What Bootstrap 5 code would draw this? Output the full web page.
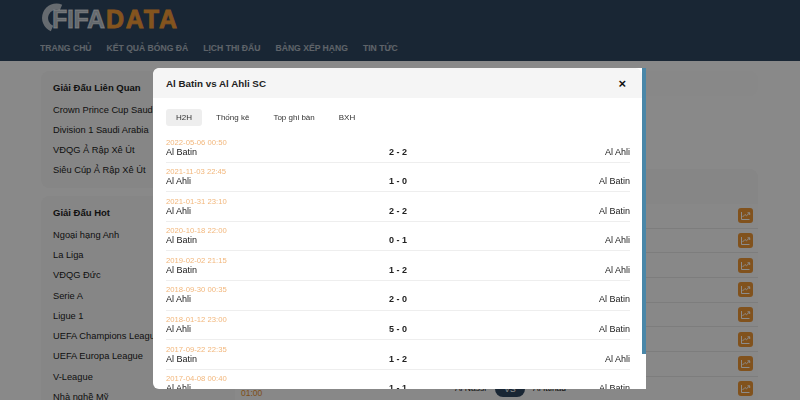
<!DOCTYPE html>
<html lang="vi">

<head>
    <meta charset="UTF-8">
    <title>FIFA Data</title>
    <meta name="viewport" content="width=device-width, initial-scale=1">
    <link href="https://cdn.jsdelivr.net/npm/bootstrap@5.3.3/dist/css/bootstrap.min.css" rel="stylesheet">
    <style>
        body {
            background: #fafafa;
            font-family: "Liberation Sans", Arial, sans-serif;
            font-size: 9.3px;
            color: #222;
            overflow: hidden;
            height: 400px;
        }

        .site-head {
            background: #2e4660;
            height: 61px;
            padding: 3px 40px 0;
        }

        .site-logo {
            display: block;
            width: 140px;
            height: 30px;
        }

        .site-logo text {
            font-family: "Liberation Sans", Arial, sans-serif;
            font-weight: 700;
            font-size: 25px;
            stroke-width: .8px;
        }

        .site-menu {
            gap: 15px;
            margin-top: 9px;
        }

        .site-menu a {
            color: #fff;
            opacity: .6;
            text-decoration: none;
            font-size: 8.6px;
            font-weight: 700;
            line-height: 12px;
        }

        .page-wrap {
            padding: 10px 42px 0 41px;
            gap: 5px;
        }

        .side-col {
            width: 194px;
            flex: none;
        }

        .side-box {
            background: #f4f4f4;
            border-radius: 8px;
            padding: 6px 12px 7px;
            margin-bottom: 8.5px;
            white-space: nowrap;
            overflow: hidden;
        }

        .side-box h6 {
            font-size: 9.5px;
            font-weight: 700;
            line-height: 21px;
            margin: 0 0 1.5px;
        }

        .side-box a {
            display: block;
            color: #222;
            text-decoration: none;
            line-height: 20.3px;
        }

        .main-col {
            flex: 1;
        }

        .top-panel {
            background: #f7f7f7;
            border-radius: 8px;
            height: 25px;
            margin-bottom: 73px;
        }

        .match-panel {
            background: #f4f4f4;
            border-radius: 8px;
            padding-top: 35px;
        }

        .match-line {
            height: 24.7px;
            border-bottom: 1px solid #e4e4e4;
            background: #f7f7f7;
            padding: 0 5px;
            font-size: 8.5px;
        }

        .kick-time {
            color: #e8912e;
            width: 60px;
            margin-left: -4px;
            padding-top: 10px;
        }

        .home-name {
            width: 186px;
            text-align: right;
        }

        .vs-pill {
            background: #2e4660;
            color: #fff;
            width: 30px;
            height: 16px;
            line-height: 16px;
            border-radius: 8px;
            text-align: center;
            margin: 0 8px;
        }

        .chart-btn {
            width: 15px;
            height: 15px;
            background: #ec9535;
            border-radius: 3px;
            margin-left: auto;
        }

        .chart-btn svg {
            display: block;
            width: 15px;
            height: 15px;
        }

        .modal-backdrop.show {
            opacity: .45;
        }

        .modal-dialog {
            max-width: 493px;
            margin: 68px 0 0 153px;
        }

        .modal-content {
            height: 321px;
            overflow: hidden;
            border: 0;
            border-radius: 6px 0 0 6px;
        }

        /* scrollbar of the modal, as the picture shows it */
        .modal-thumb {
            position: absolute;
            top: 0;
            right: 0;
            width: 4px;
            height: 286px;
            background: #4a87a8;
        }

        .modal-header {
            background: #f5f5f5;
            height: 30px;
            padding: 2px 16px 0 13px;
            margin-right: 4px;
            border: 0;
            flex: none;
        }

        .modal-title {
            font-size: 9.8px;
            font-weight: 700;
            line-height: 14px;
        }

        .close-mark {
            font-size: 13px;
            font-weight: 700;
            line-height: 14px;
            color: #111;
            background: none;
            border: 0;
            padding: 0;
        }

        .modal-body {
            padding: 11px 16px 26px 13px;
            flex: none;
        }

        .nav-pills {
            gap: 4px;
            margin-bottom: 7px;
        }

        .nav-pills .nav-link {
            font-size: 8px;
            line-height: 17px;
            padding: 0 10px;
            border-radius: 3px;
            color: #333;
        }

        .nav-pills .nav-link.active {
            background: #eee;
            color: #333;
        }

        .h2h-line {
            border-bottom: 1px solid #eee;
            height: 29.6px;
            padding-top: 4.5px;
        }

        .h2h-date {
            color: #f2b77c;
            font-size: 7.7px;
            line-height: 10px;
        }

        .h2h-teams {
            line-height: 8px;
            font-size: 9px;
        }
    </style>
</head>

<body>

    <svg width="0" height="0" class="d-none">
        <symbol id="trend" viewBox="0 0 15 15">
            <path d="M3.500 4v7.500h8M4.500 9l2.500-2.500 1.500 1.200L11.500 5M9.500 4.800h2.200V7" fill="none" stroke="#fff" stroke-width="1"/>
        </symbol>
    </svg>

    <!-- Header -->
    <header class="site-head">
        <svg class="site-logo" viewBox="0 0 140 30">
            <path d="M21 4.500A11 11 0 1 0 12 25.500" fill="none" stroke="#fff" stroke-opacity=".68" stroke-width="6"/>
            <text x="12" y="25" fill="#fff" fill-opacity=".68" stroke="#fff" stroke-opacity=".68" textLength="53">FIFA</text>
            <text x="66" y="25" fill="#f09a38" stroke="#f09a38" textLength="71">DATA</text>
        </svg>
        <nav class="site-menu d-flex">
            <a href="#">TRANG CHỦ</a>
            <a href="#">KẾT QUẢ BÓNG ĐÁ</a>
            <a href="#">LỊCH THI ĐẤU</a>
            <a href="#">BẢNG XẾP HẠNG</a>
            <a href="#">TIN TỨC</a>
        </nav>
    </header>

    <!-- Page content, behind the modal -->
    <div class="page-wrap d-flex">
        <aside class="side-col">
            <div class="side-box">
                <h6>Giải Đấu Liên Quan</h6>
                <a href="#">Crown Prince Cup Saudi Arabia</a>
                <a href="#">Division 1 Saudi Arabia</a>
                <a href="#">VĐQG Ả Rập Xê Út</a>
                <a href="#">Siêu Cúp Ả Rập Xê Út</a>
            </div>
            <div class="side-box">
                <h6>Giải Đấu Hot</h6>
                <a href="#">Ngoại hạng Anh</a>
                <a href="#">La Liga</a>
                <a href="#">VĐQG Đức</a>
                <a href="#">Serie A</a>
                <a href="#">Ligue 1</a>
                <a href="#">UEFA Champions League</a>
                <a href="#">UEFA Europa League</a>
                <a href="#">V-League</a>
                <a href="#">Nhà nghề Mỹ</a>
            </div>
        </aside>
        <main class="main-col">
            <div class="top-panel"></div>
            <div class="match-panel">
                <div class="match-line d-flex align-items-center"><span class="chart-btn"><svg><use href="#trend"/></svg></span></div>
                <div class="match-line d-flex align-items-center"><span class="chart-btn"><svg><use href="#trend"/></svg></span></div>
                <div class="match-line d-flex align-items-center"><span class="chart-btn"><svg><use href="#trend"/></svg></span></div>
                <div class="match-line d-flex align-items-center"><span class="chart-btn"><svg><use href="#trend"/></svg></span></div>
                <div class="match-line d-flex align-items-center"><span class="chart-btn"><svg><use href="#trend"/></svg></span></div>
                <div class="match-line d-flex align-items-center"><span class="chart-btn"><svg><use href="#trend"/></svg></span></div>
                <div class="match-line d-flex align-items-center"><span class="chart-btn"><svg><use href="#trend"/></svg></span></div>
                <div class="match-line d-flex align-items-center">
                    <span class="kick-time">01:00</span>
                    <span class="home-name">Al Nassr</span>
                    <span class="vs-pill">VS</span>
                    <span>Al Ittihad</span>
                    <span class="chart-btn"><svg><use href="#trend"/></svg></span>
                </div>
            </div>
        </main>
    </div>

    <div class="modal-backdrop show"></div>

    <!-- H2H modal -->
    <div class="modal d-block" tabindex="-1">
        <div class="modal-dialog">
            <div class="modal-content">
                <div class="modal-thumb"></div>
                <div class="modal-header">
                    <h5 class="modal-title">Al Batin vs Al Ahli SC</h5>
                    <button type="button" class="close-mark ms-auto" aria-label="Close">&times;</button>
                </div>
                <div class="modal-body">
                    <ul class="nav nav-pills">
                        <li class="nav-item"><a class="nav-link active" href="#">H2H</a></li>
                        <li class="nav-item"><a class="nav-link" href="#">Thống kê</a></li>
                        <li class="nav-item"><a class="nav-link" href="#">Top ghi bàn</a></li>
                        <li class="nav-item"><a class="nav-link" href="#">BXH</a></li>
                    </ul>
                    <div class="h2h-line">
                        <div class="h2h-date">2022-05-06 00:50</div>
                        <div class="row g-0 h2h-teams"><div class="col-4">Al Batin</div><div class="col-4 text-center fw-bold">2 - 2</div><div class="col-4 text-end">Al Ahli</div></div>
                    </div>
                    <div class="h2h-line">
                        <div class="h2h-date">2021-11-03 22:45</div>
                        <div class="row g-0 h2h-teams"><div class="col-4">Al Ahli</div><div class="col-4 text-center fw-bold">1 - 0</div><div class="col-4 text-end">Al Batin</div></div>
                    </div>
                    <div class="h2h-line">
                        <div class="h2h-date">2021-01-31 23:10</div>
                        <div class="row g-0 h2h-teams"><div class="col-4">Al Ahli</div><div class="col-4 text-center fw-bold">2 - 2</div><div class="col-4 text-end">Al Batin</div></div>
                    </div>
                    <div class="h2h-line">
                        <div class="h2h-date">2020-10-18 22:00</div>
                        <div class="row g-0 h2h-teams"><div class="col-4">Al Batin</div><div class="col-4 text-center fw-bold">0 - 1</div><div class="col-4 text-end">Al Ahli</div></div>
                    </div>
                    <div class="h2h-line">
                        <div class="h2h-date">2019-02-02 21:15</div>
                        <div class="row g-0 h2h-teams"><div class="col-4">Al Batin</div><div class="col-4 text-center fw-bold">1 - 2</div><div class="col-4 text-end">Al Ahli</div></div>
                    </div>
                    <div class="h2h-line">
                        <div class="h2h-date">2018-09-30 00:35</div>
                        <div class="row g-0 h2h-teams"><div class="col-4">Al Ahli</div><div class="col-4 text-center fw-bold">2 - 0</div><div class="col-4 text-end">Al Batin</div></div>
                    </div>
                    <div class="h2h-line">
                        <div class="h2h-date">2018-01-12 23:00</div>
                        <div class="row g-0 h2h-teams"><div class="col-4">Al Ahli</div><div class="col-4 text-center fw-bold">5 - 0</div><div class="col-4 text-end">Al Batin</div></div>
                    </div>
                    <div class="h2h-line">
                        <div class="h2h-date">2017-09-22 22:35</div>
                        <div class="row g-0 h2h-teams"><div class="col-4">Al Batin</div><div class="col-4 text-center fw-bold">1 - 2</div><div class="col-4 text-end">Al Ahli</div></div>
                    </div>
                    <div class="h2h-line">
                        <div class="h2h-date">2017-04-08 00:40</div>
                        <div class="row g-0 h2h-teams"><div class="col-4">Al Ahli</div><div class="col-4 text-center fw-bold">1 - 1</div><div class="col-4 text-end">Al Batin</div></div>
                    </div>
                </div>
            </div>
        </div>
    </div>

    <script src="https://cdn.jsdelivr.net/npm/bootstrap@5.3.3/dist/js/bootstrap.bundle.min.js"></script>
</body>

</html>
